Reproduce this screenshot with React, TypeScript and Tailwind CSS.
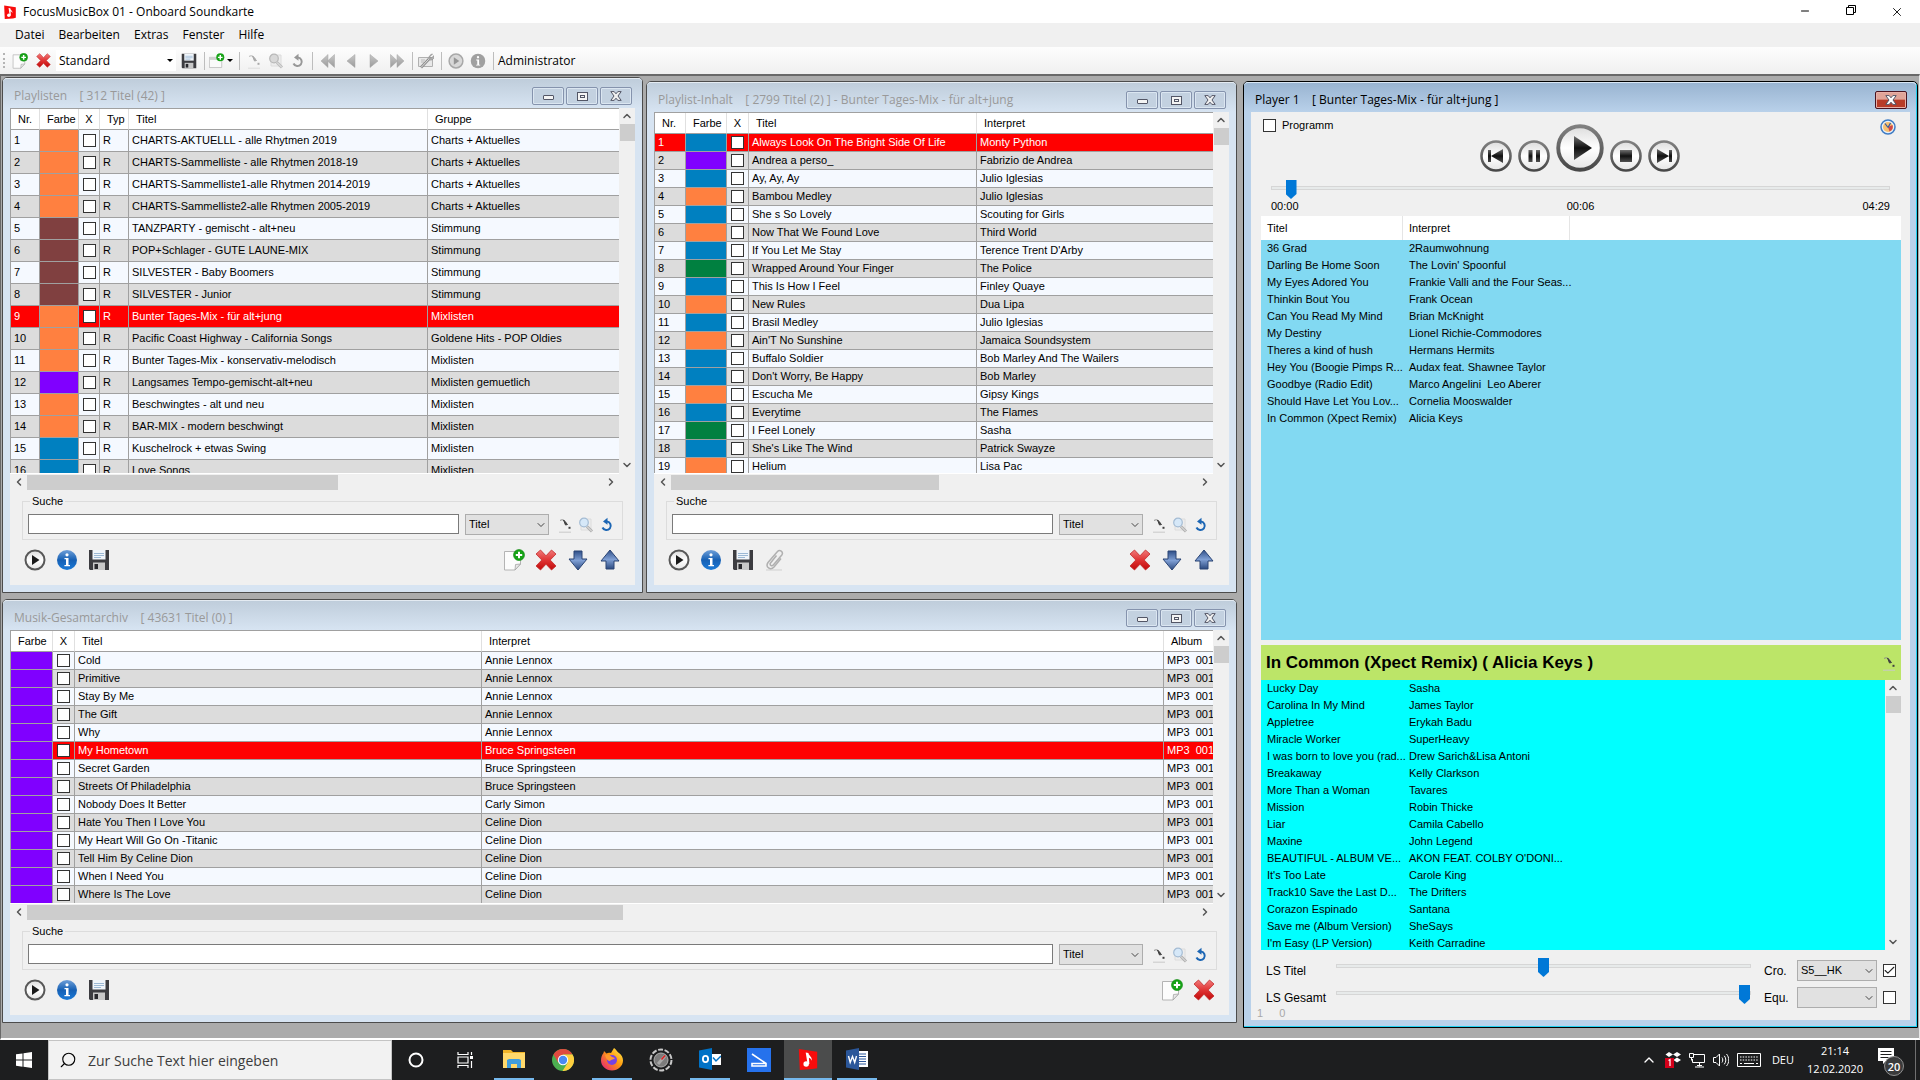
import React from "react";
import { Check, ChevronDown, ChevronUp, ChevronLeft, ChevronRight, Search, Minus, X } from "lucide-react";

const O = "bg-[#ff8040]";
const M = "bg-[#804040]";
const V = "bg-[#8000ff]";
const B = "bg-[#0080c0]";
const G = "bg-[#008040]";

const playlists: [string, string, string][] = [
  [O, "CHARTS-AKTUELLL - alle Rhytmen 2019", "Charts + Aktuelles"],
  [O, "CHARTS-Sammelliste - alle Rhytmen 2018-19", "Charts + Aktuelles"],
  [O, "CHARTS-Sammelliste1-alle Rhytmen 2014-2019", "Charts + Aktuelles"],
  [O, "CHARTS-Sammelliste2-alle Rhytmen 2005-2019", "Charts + Aktuelles"],
  [M, "TANZPARTY - gemischt - alt+neu", "Stimmung"],
  [M, "POP+Schlager - GUTE LAUNE-MIX", "Stimmung"],
  [M, "SILVESTER - Baby Boomers", "Stimmung"],
  [M, "SILVESTER - Junior", "Stimmung"],
  [O, "Bunter Tages-Mix - für alt+jung", "Mixlisten"],
  [O, "Pacific Coast Highway - California Songs", "Goldene Hits - POP Oldies"],
  [O, "Bunter Tages-Mix - konservativ-melodisch", "Mixlisten"],
  [V, "Langsames Tempo-gemischt-alt+neu", "Mixlisten gemuetlich"],
  [O, "Beschwingtes - alt und neu", "Mixlisten"],
  [O, "BAR-MIX - modern beschwingt", "Mixlisten"],
  [B, "Kuschelrock + etwas Swing", "Mixlisten"],
  [B, "Love Songs", "Mixlisten"],
];

const tracks: [string, string, string][] = [
  [B, "Always Look On The Bright Side Of Life", "Monty Python"],
  [V, "Andrea a perso_", "Fabrizio de Andrea"],
  [B, "Ay, Ay, Ay", "Julio Iglesias"],
  [O, "Bambou Medley", "Julio Iglesias"],
  [B, "She s So Lovely", "Scouting for Girls"],
  [O, "Now That We Found Love", "Third World"],
  [B, "If You Let Me Stay", "Terence Trent D'Arby"],
  [G, "Wrapped Around Your Finger", "The Police"],
  [B, "This Is How I Feel", "Finley Quaye"],
  [O, "New Rules", "Dua Lipa"],
  [B, "Brasil Medley", "Julio Iglesias"],
  [O, "Ain'T No Sunshine", "Jamaica Soundsystem"],
  [B, "Buffalo Soldier", "Bob Marley And The Wailers"],
  [B, "Don't Worry, Be Happy", "Bob Marley"],
  [O, "Escucha Me", "Gipsy Kings"],
  [B, "Everytime", "The Flames"],
  [G, "I Feel Lonely", "Sasha"],
  [B, "She's Like The Wind", "Patrick Swayze"],
  [O, "Helium", "Lisa Pac"],
];

const archive: [string, string][] = [
  ["Cold", "Annie Lennox"],
  ["Primitive", "Annie Lennox"],
  ["Stay By Me", "Annie Lennox"],
  ["The Gift", "Annie Lennox"],
  ["Why", "Annie Lennox"],
  ["My Hometown", "Bruce Springsteen"],
  ["Secret Garden", "Bruce Springsteen"],
  ["Streets Of Philadelphia", "Bruce Springsteen"],
  ["Nobody Does It Better", "Carly Simon"],
  ["Hate You Then I Love You", "Celine Dion"],
  ["My Heart Will Go On -Titanic", "Celine Dion"],
  ["Tell Him By Celine Dion", "Celine Dion"],
  ["When I Need You", "Celine Dion"],
  ["Where Is The Love", "Celine Dion"],
];

const upcoming: [string, string][] = [
  ["36 Grad", "2Raumwohnung"],
  ["Darling Be Home Soon", "The Lovin' Spoonful"],
  ["My Eyes Adored You", "Frankie Valli and the Four Seas..."],
  ["Thinkin Bout You", "Frank Ocean"],
  ["Can You Read My Mind", "Brian McKnight"],
  ["My Destiny", "Lionel Richie-Commodores"],
  ["Theres a kind of hush", "Hermans Hermits"],
  ["Hey You (Boogie Pimps R...", "Audax feat. Shawnee Taylor"],
  ["Goodbye (Radio Edit)", "Marco Angelini  Leo Aberer"],
  ["Should Have Let You Lov...", "Cornelia Mooswalder"],
  ["In Common (Xpect Remix)", "Alicia Keys"],
];

const history: [string, string][] = [
  ["Lucky Day", "Sasha"],
  ["Carolina In My Mind", "James Taylor"],
  ["Appletree", "Erykah Badu"],
  ["Miracle Worker", "SuperHeavy"],
  ["I was born to love you (rad...", "Drew Sarich&Lisa Antoni"],
  ["Breakaway", "Kelly Clarkson"],
  ["More Than a Woman", "Tavares"],
  ["Mission", "Robin Thicke"],
  ["Liar", "Camila Cabello"],
  ["Maxine", "John Legend"],
  ["BEAUTIFUL - ALBUM VE...", "AKON FEAT. COLBY O'DONI..."],
  ["It's Too Late", "Carole King"],
  ["Track10 Save the Last D...", "The Drifters"],
  ["Corazon Espinado", "Santana"],
  ["Save me (Album Version)", "SheSays"],
  ["I'm Easy (LP Version)", "Keith Carradine"],
];

/* ---------- icons ---------- */

function Gradients() {
  return (
    <svg className="absolute h-0 w-0" aria-hidden="true">
      <defs>
        <linearGradient id="gRed" x1="0" y1="0" x2="0" y2="1"><stop offset="0" stopColor="#f07a7a" /><stop offset="0.5" stopColor="#e03434" /><stop offset="1" stopColor="#c00a0a" /></linearGradient>
        <linearGradient id="gBlue" x1="0" y1="0" x2="0" y2="1"><stop offset="0" stopColor="#6f9fd8" /><stop offset="0.5" stopColor="#1660b4" /><stop offset="1" stopColor="#1a7ad8" /></linearGradient>
        <linearGradient id="gDown" x1="0" y1="0" x2="0" y2="1"><stop offset="0" stopColor="#2f4f88" /><stop offset="0.5" stopColor="#7f9fd4" /><stop offset="1" stopColor="#2c4a80" /></linearGradient>
        <linearGradient id="gRing" x1="0" y1="0" x2="0" y2="1"><stop offset="0" stopColor="#808080" /><stop offset="1" stopColor="#484848" /></linearGradient>
        <linearGradient id="gFace" x1="0" y1="0" x2="0" y2="1"><stop offset="0" stopColor="#dcdcdc" /><stop offset="0.5" stopColor="#ffffff" /><stop offset="1" stopColor="#e4e4e4" /></linearGradient>
        <linearGradient id="gGlyph" x1="0" y1="0" x2="0" y2="1"><stop offset="0" stopColor="#707070" /><stop offset="0.5" stopColor="#101010" /><stop offset="1" stopColor="#505050" /></linearGradient>
        <linearGradient id="gGray" x1="0" y1="0" x2="0" y2="1"><stop offset="0" stopColor="#c8c8c8" /><stop offset="1" stopColor="#9a9a9a" /></linearGradient>
        <linearGradient id="gFox" x1="1" y1="0" x2="0" y2="1"><stop offset="0" stopColor="#fff44f" /><stop offset="0.45" stopColor="#ff980e" /><stop offset="1" stopColor="#e31587" /></linearGradient>
      </defs>
    </svg>
  );
}

function Svg({ s = "size-[22px]", box = 22, children }: { s?: string; box?: number; children: React.ReactNode }) {
  return <svg className={`${s} shrink-0`} viewBox={`0 0 ${box} ${box}`} fill="none" aria-hidden="true">{children}</svg>;
}

function PlayIcon({ gray = false, s }: { gray?: boolean; s?: string }) {
  return (
    <Svg s={s}>
      <circle cx="11" cy="11" r="9.5" fill={gray ? "#d8d8d8" : "url(#gFace)"} stroke={gray ? "#a8a8a8" : "#585858"} strokeWidth="2" />
      <path d="M8 6v10l7.5-5z" fill={gray ? "#969696" : "#1a1a1a"} />
    </Svg>
  );
}
function InfoIcon({ gray = false, s }: { gray?: boolean; s?: string }) {
  return (
    <Svg s={s}>
      <circle cx="11" cy="11" r="10" fill={gray ? "#a0a0a0" : "url(#gBlue)"} />
      <circle cx="11" cy="5.8" r="1.6" fill="#fff" />
      <path d="M8.5 9h4v7h1.5v1.2H8.4V16H10v-5.8H8.5z" fill="#fff" />
    </Svg>
  );
}
function SaveIcon({ s }: { s?: string }) {
  return (
    <Svg s={s}>
      <path d="M1 1h20v20H2l-1-1z" fill="#3c3c40" />
      <path d="M4.500 1h13v9.500h-13z" fill="#f0f5fa" />
      <path d="M6 4.500h10M6 6.500h10M6 8.500h7" stroke="#9bb8d4" />
      <path d="M5 13.500h12V21H5z" fill="#c8c8c8" />
      <path d="M6.500 15h3.500v5H6.500z" fill="#28282c" />
    </Svg>
  );
}
function NewIcon({ s }: { s?: string }) {
  return (
    <Svg s={s}>
      <path d="M1.500 2.500h16V15l-5.500 6H1.500z" fill="#fcfcfc" stroke="#b4b4b4" />
      <path d="M12 21l.5-5.500 5-.5z" fill="#e8e8e8" stroke="#a4a4a4" strokeWidth=".8" />
      <circle cx="16" cy="6" r="5.500" fill="#17a317" stroke="#0c860c" strokeWidth=".6" />
      <path d="M16 2.800v6.400M12.800 6h6.400" stroke="#fff" strokeWidth="2" />
    </Svg>
  );
}
function NewWindowIcon() {
  return (
    <Svg s="size-4">
      <path d="M.5 6h17v14H.5z" fill="#fafafa" stroke="#b4b4b4" />
      <path d="M1 6.500h16v3H1z" fill="#d0d0d0" />
      <circle cx="15.500" cy="6" r="5.500" fill="#17a317" />
      <path d="M15.500 2.800v6.400M12.300 6h6.400" stroke="#fff" strokeWidth="2" />
    </Svg>
  );
}
function RedX({ s }: { s?: string }) {
  return (
    <Svg s={s}>
      <path d="M5.500 1L11 6.800 16.500 1 21 5 15.200 11 21 17l-4.500 4L11 15.200 5.500 21 1 17l5.800-6L1 5z" fill="url(#gRed)" stroke="#c22a2a" strokeWidth=".8" />
    </Svg>
  );
}
function ArrowIcon({ up = false }: { up?: boolean }) {
  return (
    <Svg>
      <path d={up ? "M11 1l9 11h-5v8H7v-8H2z" : "M11 21L2 10h5V2h8v8h5z"} fill="url(#gDown)" stroke="#2a4474" />
    </Svg>
  );
}
function ClipIcon() {
  return (
    <Svg>
      <path d="M2 21h16" stroke="#cfcfcf" />
      <path d="M12.500 6.500L6.500 14c-1.200 2 1.300 3.800 2.800 2l8.500-10c2-3-2-6-4.500-3.200L4 13.500c-3 4.500 2.500 8.500 6 4.500l7-8.500" stroke="#b0b0b0" strokeWidth="1.500" />
    </Svg>
  );
}
function PipetteIcon({ gray = false }: { gray?: boolean }) {
  return (
    <Svg s="size-4" box={16}>
      <path d="M2 15.200h12" stroke={gray ? "#dcdcdc" : "#c8c8c8"} />
      <path d="M3 3.500c2.500-1.500 5-.5 6.500 3" stroke={gray ? "#b4b4b4" : "#8a8a8a"} />
      <path d="M6.500 3l4 4.500-2 .5z" fill={gray ? "#a8a8a8" : "#404040"} stroke={gray ? "#a8a8a8" : "#404040"} />
      <path d="M11.500 9.800h2v2h-2z" fill={gray ? "#a8a8a8" : "#404040"} />
    </Svg>
  );
}
function FindIcon({ gray = false }: { gray?: boolean }) {
  return (
    <Svg s="size-4" box={16}>
      <path d="M3 2h10v11H3z" fill="#ededed" stroke="#dcdcdc" />
      <path d="M9 9.500l5 5" stroke={gray ? "#bcbcbc" : "#b0b0b0"} strokeWidth="3" />
      <path d="M9 9.500l5 5" stroke="#ececec" />
      <circle cx="6" cy="5.500" r="4.300" fill={gray ? "#d8d8d8" : "#d6e8f8"} stroke={gray ? "#b8b8b8" : "#a4bcd4"} strokeWidth="1.200" />
    </Svg>
  );
}
function UndoIcon({ gray = false }: { gray?: boolean }) {
  const c = gray ? "#989898" : "#1c66b4";
  return (
    <Svg s="size-4" box={16}>
      <path d="M8 4.500a4.300 4.300 0 1 1-4.500 6" stroke={c} strokeWidth="2" />
      <path d="M8.500.8v7L4 4.500z" fill={c} />
    </Svg>
  );
}
function Tri({ d }: { d: string }) {
  return <Svg s="size-4" box={16}><path d={d} fill="url(#gGray)" stroke="#a4a4a4" strokeWidth=".5" /></Svg>;
}
function WrenchIcon() {
  return (
    <Svg s="size-4" box={16}>
      <path d="M.5 4.500h14v9H.5z" fill="#e8e8e8" stroke="#b0b0b0" />
      <path d="M3 7h4M3 9h3" stroke="#b8b8b8" />
      <path d="M3 14.500L11 6" stroke="#8c8c8c" strokeWidth="2.600" />
      <path d="M3 14.500L11 6" stroke="#e0e0e0" />
      <path d="M14.500 1l-2.500 2.500v1.500h1.500L16 2.500c.5 3-1.500 5-4.500 4.500-1.500-2.500.2-5.500 3-6z" fill="#b4b4b4" stroke="#8c8c8c" strokeWidth=".7" />
    </Svg>
  );
}
function FocusLogo({ s }: { s: string }) {
  return (
    <Svg s={s} box={24}>
      <path d="M2 1l20 3v18l-5 1L3 24z" fill="#f80c0c" />
      <circle cx="10" cy="17.500" r="3" fill="#fff" />
      <path d="M11.500 17.500L9.500 5l3 .5c0 3 4.500 4 3.500 8.500-.5-2-1.500-3-3-3.500l.5 7z" fill="#fff" />
    </Svg>
  );
}
function ClockIcon() {
  return (
    <Svg s="size-4" box={16}>
      <circle cx="8" cy="8" r="7" fill="#e8f0fa" stroke="#3f7cc4" strokeWidth="1.500" />
      <circle cx="8" cy="8" r="5" fill="#f8c070" />
      <path d="M8 8l4.500-2a5 5 0 0 1-3 6.500z" fill="#d04848" />
      <path d="M8 8.500L5 4.500M8 8.500L10.500 4" stroke="#3058a0" strokeWidth="1.200" />
    </Svg>
  );
}

/* ---------- controls ---------- */

function Box({ label, checked = false }: { label: string; checked?: boolean }) {
  return (
    <span className="relative inline-block size-[13px] shrink-0 align-middle">
      <input type="checkbox" aria-label={label} defaultChecked={checked} className="peer block size-[13px] appearance-none border border-[#333] bg-white" />
      <Check className="pointer-events-none absolute inset-0 hidden size-[13px] text-[#222] peer-checked:block" strokeWidth={2} />
    </span>
  );
}

function IconButton({ label, children }: { label: string; children: React.ReactNode }) {
  return <button type="button" aria-label={label} title={label} className="flex shrink-0 items-center justify-center">{children}</button>;
}

function Range({ label, max, value, className }: { label: string; max: number; value: number; className: string }) {
  return (
    <input
      type="range"
      aria-label={label}
      min={0}
      max={max}
      defaultValue={value}
      className={`${className} block appearance-none bg-transparent [&::-webkit-slider-runnable-track]:h-1 [&::-webkit-slider-runnable-track]:border [&::-webkit-slider-runnable-track]:border-[#d6d6d6] [&::-webkit-slider-runnable-track]:bg-[#e7eaea] [&::-webkit-slider-thumb]:-mt-[7px] [&::-webkit-slider-thumb]:h-[19px] [&::-webkit-slider-thumb]:w-[11px] [&::-webkit-slider-thumb]:appearance-none [&::-webkit-slider-thumb]:bg-[#0078d7] [&::-webkit-slider-thumb]:[clip-path:polygon(0_0,100%_0,100%_74%,50%_100%,0_74%)]`}
    />
  );
}

function Drop({ label, options, className }: { label: string; options: string[]; className: string }) {
  return (
    <span className={`relative block h-[21px] shrink-0 ${className}`}>
      <select aria-label={label} className="block h-full w-full appearance-none border border-[#adadad] bg-[#e1e1e1] pl-[3px] text-[11px]">
        {options.map((o) => <option key={o}>{o}</option>)}
      </select>
      <ChevronDown className="pointer-events-none absolute right-[2px] top-[5px] size-3 text-[#444]" strokeWidth={2} />
    </span>
  );
}

function VScroll() {
  return (
    <div className="flex w-4 shrink-0 flex-col items-center bg-[#f0f0f0]">
      <button type="button" aria-label="Nach oben" className="flex h-4 w-full items-center justify-center"><ChevronUp className="size-3 text-[#555]" strokeWidth={3} /></button>
      <div className="h-[17px] w-[15px] bg-[#cdcdcd]" />
      <div className="flex-1" />
      <button type="button" aria-label="Nach unten" className="flex h-4 w-full items-center justify-center"><ChevronDown className="size-3 text-[#555]" strokeWidth={3} /></button>
    </div>
  );
}

function HScroll({ thumb }: { thumb: string }) {
  return (
    <div className="mr-4 flex h-[17px] items-center border-t border-white bg-[#f0f0f0]">
      <button type="button" aria-label="Nach links" className="flex h-4 w-[17px] items-center justify-center"><ChevronLeft className="size-3 text-[#555]" strokeWidth={3} /></button>
      <div className="flex-1"><div className={`h-[15px] bg-[#cdcdcd] ${thumb}`} /></div>
      <button type="button" aria-label="Nach rechts" className="flex h-4 w-[17px] items-center justify-center"><ChevronRight className="size-3 text-[#555]" strokeWidth={3} /></button>
    </div>
  );
}

function SearchBox({ name }: { name: string }) {
  return (
    <fieldset className="mx-3 mt-1 border border-[#dcdcdc] pb-[5px] pl-[5px] pr-[7px] pt-[6px]">
      <legend className="ml-[2px] px-[2px] text-[11px] leading-[14px]">Suche</legend>
      <div className="flex h-5 items-start">
        <input type="text" aria-label={`Suche in ${name}`} className="h-5 min-w-0 flex-1 border border-[#7a7a7a] bg-white px-1" />
        <Drop label={`Suchfeld ${name}`} options={["Titel", "Interpret"]} className="ml-[6px] w-[84px]" />
        <div className="ml-2 flex h-[21px] items-center gap-[5px]">
          <IconButton label="Filter"><PipetteIcon /></IconButton>
          <IconButton label="Suchen"><FindIcon /></IconButton>
          <IconButton label="Zurücksetzen"><UndoIcon /></IconButton>
        </div>
      </div>
    </fieldset>
  );
}

function Footer({ clip = false, add = false, move = false }: { clip?: boolean; add?: boolean; move?: boolean }) {
  return (
    <div className="mx-[14px] mb-[14px] mt-[9px] flex justify-between">
      <div className="flex gap-[10px]">
        <IconButton label="Abspielen"><PlayIcon /></IconButton>
        <IconButton label="Info"><InfoIcon /></IconButton>
        <IconButton label="Speichern"><SaveIcon /></IconButton>
        {clip && <IconButton label="Anhang"><ClipIcon /></IconButton>}
      </div>
      <div className="flex gap-[10px]">
        {add && <IconButton label="Neu"><NewIcon /></IconButton>}
        <IconButton label="Löschen"><RedX /></IconButton>
        {move && <IconButton label="Nach unten verschieben"><ArrowIcon /></IconButton>}
        {move && <IconButton label="Nach oben verschieben"><ArrowIcon up /></IconButton>}
      </div>
    </div>
  );
}

/* ---------- windows ---------- */

const captionBtn = "flex h-[18px] w-8 items-center justify-center rounded-[2px] border border-[#8593ad] bg-[#c3d1e0] shadow-[inset_0_0_0_1px_#dbe6f1]";

function MdiWindow({ title, className = "", children }: { title: string; className?: string; children: React.ReactNode }) {
  return (
    <section className={`flex min-h-0 min-w-0 flex-col rounded-t-[5px] border border-[#4c4c4c] bg-[#d7e4f2] px-[7px] pb-[7px] ${className}`}>
      <header className="-mx-[7px] flex h-[30px] shrink-0 items-center justify-between rounded-t-[4px] border-t border-[#e4ebf2] bg-linear-to-b from-[#bfcddb] to-[#d7e4f2] pl-[11px] pr-[10px] pt-[5px]">
        <h2 className="whitespace-pre font-['Open_Sans',sans-serif] text-[12px] leading-4 text-[#999]">{title}</h2>
        <div className="flex gap-[2px]">
          <button type="button" aria-label="Minimieren" className={captionBtn}><span className="mt-[2px] h-[5px] w-[11px] rounded-[1px] border border-[#535666] bg-[#f4f4f4]" /></button>
          <button type="button" aria-label="Maximieren" className={captionBtn}><span className="flex h-[9px] w-[11px] items-center justify-center border border-[#535666] bg-[#f4f4f4]"><span className="h-[3px] w-[5px] border border-[#535666]" /></span></button>
          <button type="button" aria-label="Schließen" className={captionBtn}><CaptionX /></button>
        </div>
      </header>
      <div className="flex min-h-0 flex-1 flex-col bg-[#f0f0f0]">{children}</div>
    </section>
  );
}

function CaptionX({ light = false }: { light?: boolean }) {
  return (
    <svg className="h-[10px] w-3" viewBox="0 0 12 10" aria-hidden="true">
      <path d="M.8.600h3.400L6 2.800 7.800.600h3.400L8 5l3.200 4.400H7.800L6 7.200 4.200 9.400H.8L4 5z" fill={light ? "#fff" : "#f0f0f0"} stroke="#535666" strokeWidth="1" />
    </svg>
  );
}

type Row = { nr?: string; color: string; cells: string[]; selected: boolean };

function DataTable({ cols, heads, rows, rowH }: { cols: string[]; heads: string[]; rows: Row[]; rowH: string }) {
  return (
    <div className="flex min-h-0 flex-1">
      <div className="min-w-0 flex-1 overflow-hidden border-l border-t border-[#a0a0a0] bg-white">
        <table className="w-full table-fixed border-separate border-spacing-0 text-[11px] leading-[15px]">
          <colgroup>{cols.map((c, i) => <col key={i} className={c} />)}</colgroup>
          <thead>
            <tr className="h-[21px]">
              {heads.map((h, i) => (
                <th key={i} scope="col" className={`overflow-hidden whitespace-nowrap border-b border-r border-b-[#a0a0a0] border-r-[#e0e0e0] p-0 font-normal last:border-r-0 ${h === "X" ? "text-center" : "pl-[7px] text-left"}`}>{h}</th>
              ))}
            </tr>
          </thead>
          <tbody>
            {rows.map((r, i) => {
              const bg = r.selected ? "bg-[#ff0000] text-white" : i % 2 ? "bg-[#dcdcdc]" : "bg-[#f5f9ff]";
              const cell = `overflow-hidden whitespace-pre border-b border-r border-[#a0a0a0] p-0 pl-[3px] last:border-r-0 ${bg}`;
              return (
                <tr key={i} className={rowH}>
                  {r.nr && <td className={cell}>{r.nr}</td>}
                  <td className={`border-b border-r border-[#a0a0a0] p-0 ${r.color}`} />
                  <td className={`border-b border-r border-[#a0a0a0] p-0 text-center text-[0px] ${bg}`}><Box label={`${r.cells[0]} auswählen`} /></td>
                  {r.cells.map((c, k) => <td key={k} className={cell}>{c}</td>)}
                </tr>
              );
            })}
          </tbody>
        </table>
      </div>
      <VScroll />
    </div>
  );
}

/* ---------- player ---------- */

function Round({ label, big = false, d }: { label: string; big?: boolean; d: string }) {
  return (
    <button type="button" aria-label={label} className="shrink-0">
      <svg className={big ? "size-12" : "size-8"} viewBox="0 0 32 32" aria-hidden="true">
        <circle cx="16" cy="16" r="14.500" fill="url(#gFace)" stroke="url(#gRing)" strokeWidth="2.600" />
        <path d={d} fill="url(#gGlyph)" />
      </svg>
    </button>
  );
}

function TrackList({ rows, head = false }: { rows: [string, string][]; head?: boolean }) {
  return (
    <table className="w-full table-fixed border-separate border-spacing-0 text-[11px] leading-[17px]">
      <colgroup><col className="w-[142px]" /><col className="w-[167px]" /><col /></colgroup>
      {head && (
        <thead>
          <tr className="h-6 bg-white text-left">
            <th scope="col" className="border-r border-[#e5e5e5] p-0 pl-[6px] font-normal">Titel</th>
            <th scope="col" className="border-r border-[#e5e5e5] p-0 pl-[6px] font-normal">Interpret</th>
            <td className="p-0" />
          </tr>
        </thead>
      )}
      <tbody>
        {rows.map(([a, b], i) => (
          <tr key={i} className="h-[17px]">
            <td className="whitespace-pre p-0 pl-[6px]">{a}</td>
            <td className="whitespace-pre p-0 pl-[6px]">{b}</td>
            <td className="p-0" />
          </tr>
        ))}
      </tbody>
    </table>
  );
}

function Player() {
  return (
    <section className="mb-[10px] mt-[5px] flex min-h-0 min-w-0 flex-col rounded-t-[5px] border border-black bg-[#b9d1ea] px-[7px] pb-[7px] shadow-[inset_-1px_-1px_0_#20d0f0]">
      <header className="-ml-[7px] -mr-[6px] flex h-[30px] shrink-0 items-center justify-between rounded-t-[4px] border-t border-[#d8e6f4] bg-linear-to-b from-[#99b4d1] to-[#b9d1ea] pl-[11px] pr-[9px] pt-[5px]">
        <h2 className="whitespace-pre font-['Open_Sans',sans-serif] text-[12px] leading-4">Player 1    [ Bunter Tages-Mix - für alt+jung ]</h2>
        <button type="button" aria-label="Schließen" className="flex h-[18px] w-8 items-center justify-center rounded-[2px] border border-[#4a1420] bg-linear-to-b from-[#e0a498] from-45% to-[#b83c28] to-50% shadow-[inset_0_0_0_1px_#e8b0a8]"><CaptionX light /></button>
      </header>
      <div className="flex min-h-0 flex-1 flex-col bg-[#f0f0f0]">
        <div className="flex justify-between pl-3 pr-[14px]">
          <label className="mt-[6px] flex h-[14px] w-24 items-center gap-[6px] text-[11px]">
            <Box label="Programm" />Programm
          </label>
          <div className="mt-3 flex items-end gap-[6px]">
            <Round label="Zurück" d="M8 10h3v12H8zM23 9v14l-12-7z" />
            <Round label="Pause" d="M10.500 10h4v12h-4zM18 10h4v12h-4z" />
            <Round label="Wiedergabe" big d="M12 8v16l12-8z" />
            <Round label="Stopp" d="M10 10h12v12H10z" />
            <Round label="Weiter" d="M21 10h3v12h-3zM9 9v14l12-7z" />
          </div>
          <div className="mt-[7px] flex h-4 w-24 justify-end"><IconButton label="Uhr"><ClockIcon /></IconButton></div>
        </div>
        <div className="px-5 pt-[6px]">
          <Range label="Position" max={269} value={6} className="h-5 w-full" />
          <div className="mt-px grid grid-cols-3 text-[11px] leading-[14px]">
            <span>00:00</span><span className="text-center">00:06</span><span className="text-right">04:29</span>
          </div>
        </div>
        <div className="ml-[10px] mr-[9px] mt-[3px] min-h-0 flex-[424] overflow-hidden bg-[#82d9f2]"><TrackList rows={upcoming} head /></div>
        <div className="ml-[10px] mr-[9px] mt-[5px] flex h-[35px] shrink-0 items-center justify-between bg-[#bce568] pl-[5px] pr-1">
          <h3 className="text-[17px] font-bold">In Common (Xpect Remix) ( Alicia Keys )</h3>
          <IconButton label="Filter"><PipetteIcon /></IconButton>
        </div>
        <div className="ml-[10px] mr-[9px] flex min-h-0 flex-[270]">
          <div className="min-w-0 flex-1 overflow-hidden bg-[#00ffff]"><TrackList rows={history} /></div>
          <VScroll />
        </div>
        <div className="flex flex-col gap-[6px] pl-[15px] pr-[14px] pt-[10px] text-[12px]">
          <div className="flex h-[21px] items-center">
            <span className="w-[70px]">LS Titel</span>
            <Range label="LS Titel" max={100} value={50} className="h-3 min-w-0 flex-1 self-start" />
            <span className="ml-[13px] w-[33px]">Cro.</span>
            <Drop label="Cro." options={["S5__HK"]} className="w-20" />
            <span className="ml-[6px] flex"><Box label="Cro. aktiv" checked /></span>
          </div>
          <div className="flex h-[21px] items-center">
            <span className="w-[70px]">LS Gesamt</span>
            <Range label="LS Gesamt" max={100} value={100} className="h-3 min-w-0 flex-1 self-start" />
            <span className="ml-[13px] w-[33px]">Equ.</span>
            <Drop label="Equ." options={[""]} className="w-20" />
            <span className="ml-[6px] flex"><Box label="Equ. aktiv" /></span>
          </div>
        </div>
        <div className="mb-[2px] flex gap-4 pl-[6px] text-[11px] leading-[10px] text-[#a8a8a8]"><span>1</span><span>0</span></div>
      </div>
    </section>
  );
}

/* ---------- taskbar ---------- */

function Task({ label, bar, active = false, children }: { label: string; bar?: string; active?: boolean; children: React.ReactNode }) {
  return (
    <button type="button" aria-label={label} className={`flex h-10 w-12 shrink-0 flex-col items-center ${active ? "bg-[#4b4c4c]" : ""}`}>
      <span className="flex w-full flex-1 items-center justify-center">{children}</span>
      {bar && <span className={`h-[2px] bg-[#76b9ed] ${bar}`} />}
    </button>
  );
}

function Taskbar() {
  return (
    <footer className="flex h-10 shrink-0 items-center bg-[#1d1e1f] font-['Open_Sans',sans-serif] text-white">
      <button type="button" aria-label="Start" className="flex h-10 w-12 shrink-0 items-center justify-center">
        <Svg s="size-4" box={16}><path d="M0 2.300L6.500 1.400v6.200H0zM7.500 1.200L16 0v7.600H7.500zM0 8.500h6.500v6.200L0 13.800zM7.500 8.500H16V16l-8.500-1.200z" fill="#fff" /></Svg>
      </button>
      <label className="flex h-10 w-[344px] shrink-0 items-center border border-[#c4c4c4] bg-[#f2f2f2] pl-[10px] text-black">
        <Search className="size-[18px] -scale-x-100" strokeWidth={1.500} />
        <input type="text" aria-label="Windows-Suche" placeholder="Zur Suche Text hier eingeben" className="ml-[11px] min-w-0 flex-1 bg-transparent text-[14px] outline-none placeholder:text-[#3c3c3c]" />
      </label>
      <div className="flex gap-px">
        <Task label="Cortana"><Svg s="size-4" box={16}><circle cx="8" cy="8" r="6.500" stroke="#fff" strokeWidth="2" /></Svg></Task>
        <Task label="Aktive Anwendungen"><Svg s="size-4" box={16}><path d="M1 0v2.500h10V0M1 16v-2.500h10V16M1 5h10v6H1zM14.500 0v3M14.500 9v7" stroke="#fff" strokeWidth="1.200" /><path d="M13 4h3v3h-3z" fill="#fff" /></Svg></Task>
        <Task label="Explorer" bar="w-10"><Svg s="size-[22px]"><path d="M0 2h8l2 2h12v15H0z" fill="#f0b429" /><path d="M0 5h22v15H0z" fill="#ffd96b" /><path d="M4 20v-8l2-1h10l2 1v8h-4v-4H8v4z" fill="#3f9ddd" /></Svg></Task>
        <Task label="Chrome"><Svg s="size-[22px]"><circle cx="11" cy="11" r="11" fill="#4caf50" /><path d="M11 0a11 11 0 0 1 9.500 5.500H11L6.300 13.700 1.500 5.500A11 11 0 0 1 11 0z" fill="#e04a3f" /><path d="M20.500 5.500A11 11 0 0 1 10.500 22l5.200-8.300L11 5.500z" fill="#ffcf3f" /><circle cx="11" cy="11" r="5.200" fill="#fff" /><circle cx="11" cy="11" r="4.200" fill="#4a8af4" /></Svg></Task>
        <Task label="Firefox" bar="w-10"><Svg s="size-6" box={24}><path d="M14 1c3 2 3 4 5 5 2.500 2 4 4 4 7.500C23 19 18 23.500 12 23.500S1 19 1 13.500C1 10 2 8 3.500 6l.5-2 2.500 2.500c1.500-1 3-.8 4.500-.5C12 4 13 3 14 1z" fill="url(#gFox)" /><circle cx="12" cy="13" r="5" fill="#7542e5" /><path d="M5 8c3-1 5 0 7 2l3 1c-1 2-4 1-5 3-2 0-4-2-5-6z" fill="#ff9a2e" /></Svg></Task>
        <Task label="Regler"><Svg s="size-6" box={24}><circle cx="12" cy="12" r="10.500" stroke="#c8c8c8" strokeWidth="2" strokeDasharray="5 1.600" /><circle cx="12" cy="12" r="7" fill="#7c7c7c" stroke="#b0b0b0" /><path d="M9 16l7-8" stroke="#a8a8a8" strokeWidth="3" /><path d="M12.500 11.500L16 7.500" stroke="#e02020" strokeWidth="1.500" /></Svg></Task>
        <Task label="Outlook" bar="w-10"><Svg s="size-[22px]"><path d="M0 2.500L13 0v22L0 19.500z" fill="#0072c6" /><path d="M13 6h9v11h-9z" fill="#fff" /><path d="M14 9.500l3 3.500 5-5" stroke="#0072c6" strokeWidth="1.500" /><ellipse cx="6.500" cy="11" rx="2.600" ry="3.200" stroke="#fff" strokeWidth="1.800" /></Svg></Task>
        <Task label="Scanner"><Svg s="size-6" box={24}><path d="M0 0h24v24H0z" fill="#2672ec" /><path d="M5 6l14 9.500M5 18h14v-2.500H5z" stroke="#fff" strokeWidth="1.600" /></Svg></Task>
        <Task label="FocusMusicBox" bar="w-12" active><FocusLogo s="size-[22px]" /></Task>
        <Task label="Word" bar="w-10">
          <Svg s="size-[22px]"><path d="M12 3h10v16H12z" fill="#fff" /><path d="M13 6h7M13 8.500h7M13 11h7M13 13.500h7M13 16h7" stroke="#2b579a" /><path d="M0 2.500L13 0v22L0 19.500z" fill="#2b579a" /><path d="M2.500 8l1.700 6.500L6.500 8.500l2.200 6L10.500 8" stroke="#fff" strokeWidth="1.400" /></Svg>
        </Task>
      </div>
      <div className="ml-auto flex h-10 items-center text-[12px] leading-4">
        <IconButton label="Ausgeblendete Symbole"><ChevronUp className="size-4" strokeWidth={2} /></IconButton>
        <span className="ml-2 flex">
          <Svg s="size-4" box={16}><path d="M4 0l4 2.500L4 5 .5 2.500zM12 0l4 2.500L12 5 8 2.500zM12 5.500L16 8l-4 2.500L8.500 8z" fill="#fff" /><path d="M0 6h9v10H0z" fill="#d4001a" /><path d="M3.500 8.500l1.500-1V14" stroke="#fff" strokeWidth="1.200" /></Svg>
        </span>
        <span className="ml-2 flex"><Svg s="size-4" box={16}><path d="M5 2.500h10.500v8H3.500V7M8 13.500h5M10.500 10.500v4M6 15h9" stroke="#fff" /><path d="M.5 1.500h4v4h-4zM2.500 5.500v3" stroke="#fff" /></Svg></span>
        <span className="ml-2 flex"><Svg s="size-4" box={16}><path d="M.5 5.500H3l3.500-3.500v12L3 10.500H.5zM9 5.500c1 1.500 1 3.500 0 5M11.300 3.800c2 2.500 2 6 0 8.500M13.500 2c3 3.500 3 8.500 0 12" stroke="#fff" /></Svg></span>
        <span className="ml-2 flex"><svg className="h-[14px] w-6" viewBox="0 0 24 14" fill="none" aria-hidden="true"><path d="M.5.500h23v13H.5z" stroke="#fff" /><path d="M3 4h18M3 7h18" stroke="#fff" strokeDasharray="1.500 1.200" /><path d="M3 10.500h2M7 10.500h10M19 10.500h2" stroke="#fff" /></svg></span>
        <span className="ml-[11px] text-[11px]">DEU</span>
        <div className="ml-[13px] flex w-14 flex-col text-center text-[11px] leading-[18px]"><span>21:14</span><span>12.02.2020</span></div>
        <button type="button" aria-label="Benachrichtigungen" className="relative ml-[15px] h-8 w-[26px]">
          <svg className="absolute left-0 top-1 size-4" viewBox="0 0 16 16" aria-hidden="true"><path d="M0 0h16v13H8l-3 3v-3H0z" fill="#fff" /><path d="M2.500 3.500h11M2.500 6.500h11M2.500 9.500h8" stroke="#1d1e1f" /></svg>
          <span className="absolute bottom-0 right-0 flex size-5 items-center justify-center rounded-full border border-[#909090] bg-[#3a3b3c] text-[11px] font-semibold leading-none">20</span>
        </button>
        <span className="ml-[11px] mr-1 h-10 w-px bg-[#707070]" />
      </div>
    </footer>
  );
}

/* ---------- application frame ---------- */

function Sep() {
  return <span className="h-[18px] w-px shrink-0 bg-[#bdbdbd]" />;
}

function Toolbar() {
  return (
    <div className="flex h-[27px] shrink-0 items-center bg-linear-to-b from-[#fdfdfd] to-[#f0f0f0] pl-[3px] font-['Open_Sans',sans-serif] text-[12px]">
      <span className="h-[15px] border-l-2 border-dotted border-[#b4b4b4]" />
      <div className="ml-[7px] flex items-center gap-2">
        <IconButton label="Neu"><NewIcon s="size-4" /></IconButton>
        <IconButton label="Löschen"><RedX s="size-[15px]" /></IconButton>
      </div>
      <span className="relative ml-[5px] block h-[21px] w-[120px]">
        <select aria-label="Ansicht" className="block h-full w-full appearance-none bg-white pl-[3px]"><option>Standard</option></select>
        <span className="pointer-events-none absolute right-[3px] top-[9px] border-x-[3px] border-t-[3px] border-x-transparent border-t-black" />
      </span>
      <div className="ml-[5px] flex items-center"><IconButton label="Speichern"><SaveIcon s="size-4" /></IconButton></div>
      <div className="ml-[7px] flex items-center gap-1">
        <Sep />
        <button type="button" aria-label="Neues Fenster" className="flex items-center gap-[2px]"><NewWindowIcon /><span className="border-x-[3px] border-t-[3px] border-x-transparent border-t-black" /></button>
      </div>
      <div className="ml-[6px] flex items-center gap-[6px]">
        <Sep />
        <IconButton label="Filter"><PipetteIcon gray /></IconButton>
        <IconButton label="Suchen"><FindIcon gray /></IconButton>
        <IconButton label="Zurücksetzen"><UndoIcon gray /></IconButton>
      </div>
      <div className="ml-[6px] flex items-center gap-[7px]">
        <Sep />
        <IconButton label="Zum Anfang"><Tri d="M8 1.500v13L1 8zM14.500 1.500v13L7.500 8z" /></IconButton>
        <IconButton label="Zurück"><Tri d="M12 1.500v13L4 8z" /></IconButton>
        <IconButton label="Vor"><Tri d="M4 1.500v13L12 8z" /></IconButton>
        <IconButton label="Zum Ende"><Tri d="M1.500 1.500v13L8.500 8zM8 1.500v13L15 8z" /></IconButton>
      </div>
      <div className="ml-[7px] flex items-center gap-[5px]"><Sep /><IconButton label="Einstellungen"><WrenchIcon /></IconButton></div>
      <div className="ml-[7px] flex items-center gap-[6px]">
        <Sep />
        <IconButton label="Wiedergabe"><PlayIcon gray s="size-4" /></IconButton>
        <IconButton label="Info"><InfoIcon gray s="size-4" /></IconButton>
      </div>
      <div className="ml-[7px] flex items-center gap-1"><Sep /><span>Administrator</span></div>
    </div>
  );
}

export default function App() {
  return (
    <div className="flex h-screen flex-col overflow-hidden bg-white font-['Liberation_Sans',Arial,sans-serif] text-black">
      <Gradients />
      <header className="flex h-[23px] shrink-0 items-center justify-between font-['Open_Sans',sans-serif]">
        <div className="flex items-center gap-[6px] pl-[3px]">
          <FocusLogo s="size-[14px]" />
          <h1 className="text-[12px]">FocusMusicBox 01 - Onboard Soundkarte</h1>
        </div>
        <div className="flex">
          <button type="button" aria-label="Minimieren" className="flex w-[46px] justify-center"><Minus className="size-3" strokeWidth={2} /></button>
          <button type="button" aria-label="Wiederherstellen" className="flex w-[46px] justify-center">
            <Svg s="size-[10px]" box={10}><path d="M.5 2.500h7v7h-7zM2.500 2.500v-2h7v7h-2" stroke="#000" /></Svg>
          </button>
          <button type="button" aria-label="Beenden" className="flex w-[46px] justify-center"><X className="size-[14px]" strokeWidth={1.500} /></button>
        </div>
      </header>
      <nav className="flex h-6 shrink-0 items-center gap-[14px] bg-[#f0f0f0] pl-[15px] font-['Open_Sans',sans-serif] text-[12px]">
        {["Datei", "Bearbeiten", "Extras", "Fenster", "Hilfe"].map((m) => <button key={m} type="button">{m}</button>)}
      </nav>
      <Toolbar />
      <main className="grid min-h-0 flex-1 grid-cols-[minmax(0,1235fr)_minmax(0,675fr)] grid-rows-[minmax(0,1fr)] gap-[6px] border-b-2 border-l border-r border-t-2 border-b-white border-l-[#696969] border-r-[#e8e8e8] border-t-[#696969] bg-[#ababab] px-px">
        <div className="mb-[15px] mt-px grid min-h-0 min-w-0 grid-rows-[minmax(0,516fr)_minmax(0,424fr)] gap-[6px]">
          <div className="grid min-h-0 grid-cols-[minmax(0,641fr)_minmax(0,591fr)] grid-rows-[minmax(0,1fr)] gap-[3px]">
            <MdiWindow title="Playlisten    [ 312 Titel (42) ]">
              <DataTable
                cols={["w-[29px]", "w-[39px]", "w-[21px]", "w-[29px]", "w-[299px]", ""]}
                heads={["Nr.", "Farbe", "X", "Typ", "Titel", "Gruppe"]}
                rowH="h-[22px]"
                rows={playlists.map(([color, t, g], i) => ({ nr: String(i + 1), color, cells: ["R", t, g], selected: i === 8 }))}
              />
              <HScroll thumb="w-[54%]" />
              <SearchBox name="Playlisten" />
              <Footer add move />
            </MdiWindow>
            <MdiWindow title="Playlist-Inhalt    [ 2799 Titel (2) ] - Bunter Tages-Mix - für alt+jung" className="mt-1">
              <DataTable
                cols={["w-[31px]", "w-[41px]", "w-[22px]", "w-[228px]", ""]}
                heads={["Nr.", "Farbe", "X", "Titel", "Interpret"]}
                rowH="h-[18px]"
                rows={tracks.map(([color, t, a], i) => ({ nr: String(i + 1), color, cells: [t, a], selected: i === 0 }))}
              />
              <HScroll thumb="w-[51%]" />
              <SearchBox name="Playlist-Inhalt" />
              <Footer clip move />
            </MdiWindow>
          </div>
          <MdiWindow title="Musik-Gesamtarchiv    [ 43631 Titel (0) ]">
            <DataTable
              cols={["w-[42px]", "w-[22px]", "w-[407px]", "", "w-[49px]"]}
              heads={["Farbe", "X", "Titel", "Interpret", "Album"]}
              rowH="h-[18px]"
              rows={archive.map(([t, a], i) => ({ color: V, cells: [t, a, "MP3  001"], selected: i === 5 }))}
            />
            <HScroll thumb="w-[51%]" />
            <SearchBox name="Musik-Gesamtarchiv" />
            <Footer add />
          </MdiWindow>
        </div>
        <Player />
      </main>
      <Taskbar />
    </div>
  );
}
